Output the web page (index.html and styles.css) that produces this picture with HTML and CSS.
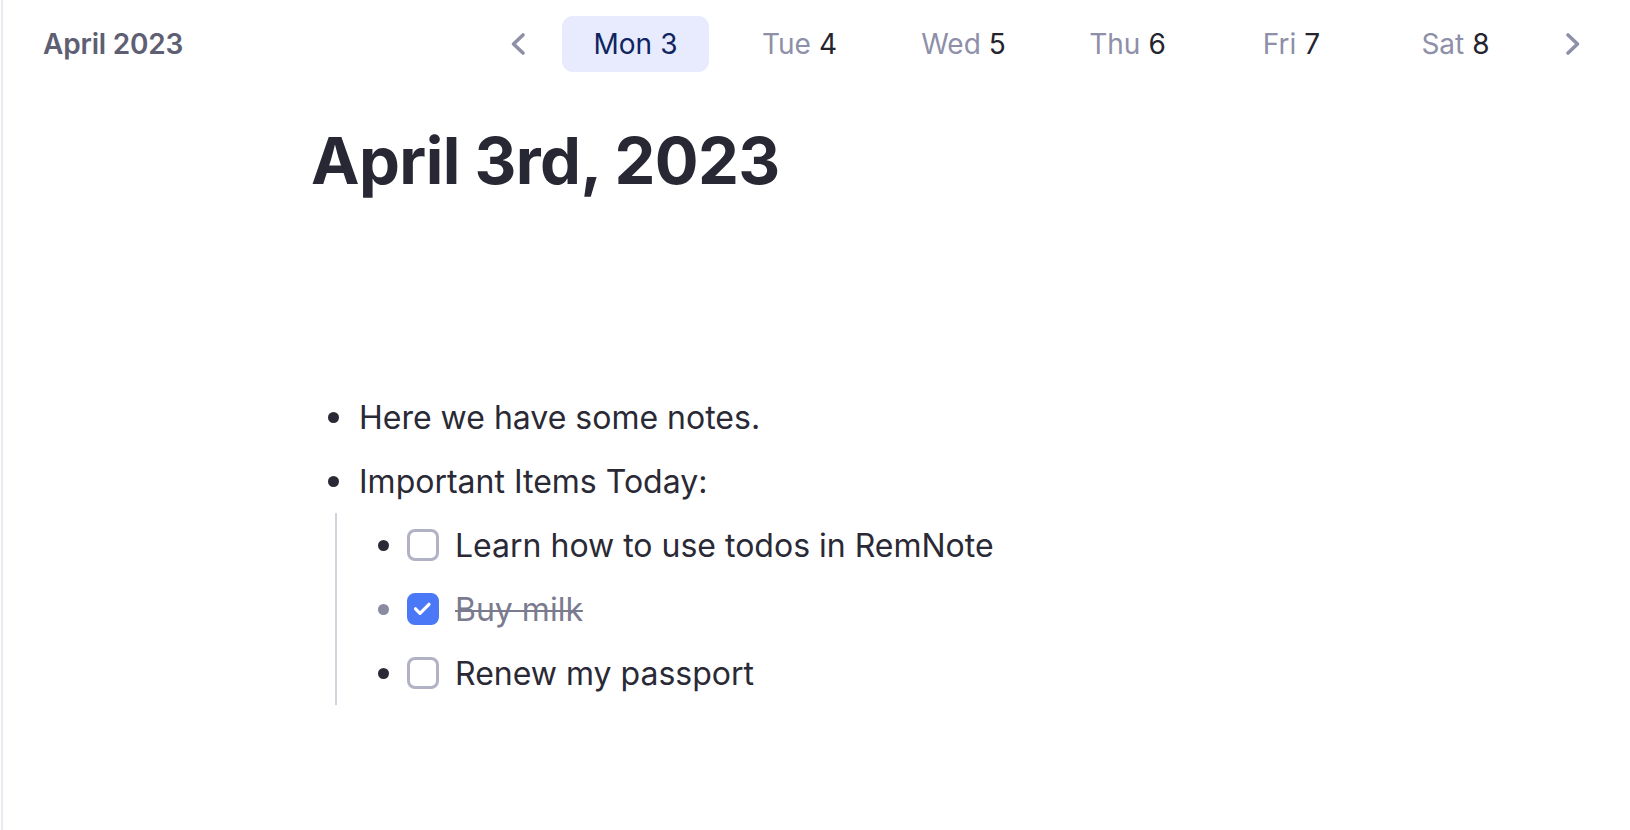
FILE: index.html
```html
<!DOCTYPE html>
<html lang="en">
<head>
<meta charset="utf-8">
<title>April 3rd, 2023</title>
<link rel="stylesheet" href="styles.css">
</head>
<body>
<div class="app">
  <header class="topbar">
    <div class="month">April 2023</div>
    <nav class="days">
      <button class="chev" aria-label="Previous week">
        <svg width="16" height="24" viewBox="0 0 16 24"><polyline points="13,3 3.5,12 13,21" fill="none" stroke="#8e8fa8" stroke-width="3.6" stroke-linecap="round" stroke-linejoin="round"/></svg>
      </button>
      <div class="day active"><span class="dname">Mon</span> <span class="dnum">3</span></div>
      <div class="day"><span class="dname">Tue</span> <span class="dnum">4</span></div>
      <div class="day"><span class="dname">Wed</span> <span class="dnum">5</span></div>
      <div class="day"><span class="dname">Thu</span> <span class="dnum">6</span></div>
      <div class="day"><span class="dname">Fri</span> <span class="dnum">7</span></div>
      <div class="day"><span class="dname">Sat</span> <span class="dnum">8</span></div>
      <button class="chev" aria-label="Next week">
        <svg width="16" height="24" viewBox="0 0 16 24"><polyline points="3,3 12.5,12 3,21" fill="none" stroke="#8e8fa8" stroke-width="3.6" stroke-linecap="round" stroke-linejoin="round"/></svg>
      </button>
    </nav>
  </header>

  <main class="doc">
    <h1 class="title">April 3rd, 2023</h1>
    <ul class="rems">
      <li class="rem"><span class="bullet"><span class="dot"></span></span><span class="text">Here we have some notes.</span></li>
      <li class="rem"><span class="bullet"><span class="dot"></span></span><span class="text">Important Items Today:</span></li>
      <li class="children">
        <ul class="rems">
          <li class="rem"><span class="bullet"><span class="dot"></span></span><span class="box"></span><span class="text todo">Learn how to use todos in RemNote</span></li>
          <li class="rem done"><span class="bullet"><span class="dot"></span></span><span class="box checked"><svg width="32" height="32" viewBox="0 0 32 32"><polyline points="8.5,15.8 13,20.3 22,11.3" fill="none" stroke="#fff" stroke-width="3.2" stroke-linecap="round" stroke-linejoin="round"/></svg></span><span class="text todo">Buy milk</span></li>
          <li class="rem"><span class="bullet"><span class="dot"></span></span><span class="box"></span><span class="text todo">Renew my passport</span></li>
        </ul>
      </li>
    </ul>
  </main>
</div>
</body>
</html>
```

FILE: styles.css
```css
* { box-sizing: border-box; }

html, body {
  margin: 0;
  padding: 0;
  background: #ffffff;
}

body {
  font-family: Inter, "Noto Sans", "Liberation Sans", sans-serif;
  color: #2a2a36;
}

.app {
  min-height: 830px;
  border-left: 2px solid #e9e9f0;
  margin-left: 1px;
}

.topbar {
  height: 88px;
  display: flex;
  align-items: center;
  justify-content: space-between;
  padding: 0 30px 0 40px;
}

.month {
  font-size: 28px;
  font-weight: 600;
  color: #5e5f73;
  letter-spacing: -0.2px;
}

.days {
  display: flex;
  align-items: center;
  gap: 17px;
}

.chev {
  width: 36px;
  height: 40px;
  border: 0;
  background: transparent;
  padding: 0;
  display: flex;
  align-items: center;
  justify-content: center;
  margin: 0 9px;
}

.day {
  width: 147px;
  height: 56px;
  display: flex;
  align-items: center;
  justify-content: center;
  gap: 8px;
  font-size: 28px;
  border-radius: 11px;
}

.dname { color: #8e8fa8; }
.dnum { color: #24242e; }

.day.active { background: #e8ebfd; }
.day.active .dname,
.day.active .dnum { color: #0e2560; }

.doc {
  padding-left: 305px;
}

.title {
  margin: 33px 0 0 3px;
  font-size: 65px;
  line-height: 80px;
  font-weight: 700;
  color: #282835;
  letter-spacing: -0.6px;
}

.rems {
  list-style: none;
  margin: 0;
  padding: 0;
}

.doc > .rems {
  margin-top: 184px;
}

.rem {
  height: 64px;
  display: flex;
  align-items: center;
}

.bullet {
  width: 50px;
  height: 64px;
  display: flex;
  align-items: center;
  justify-content: center;
  flex: none;
}

.dot {
  width: 11px;
  height: 11px;
  border-radius: 50%;
  background: #2a2a36;
}

.text {
  font-size: 32px;
  color: #2a2a36;
  margin-left: 1px;
  white-space: nowrap;
}

.children {
  margin-left: 27px;
  border-left: 2px solid #d2d2de;
  padding-left: 22px;
}

.children .bullet { width: 48px; }

.box {
  width: 32px;
  height: 32px;
  border: 3px solid #b1b2c5;
  border-radius: 8px;
  flex: none;
  display: flex;
  align-items: center;
  justify-content: center;
}

.box.checked {
  background: #4b78f6;
  border-color: #4b78f6;
}

.box.checked svg {
  flex: none;
  margin: -3px;
}

.text.todo { margin-left: 16px; }

.done .dot { background: #8a8aa0; }

.done .text {
  color: #7b7b90;
  text-decoration: line-through;
  text-decoration-color: #7b7b90;
  text-decoration-thickness: 2px;
}
```
